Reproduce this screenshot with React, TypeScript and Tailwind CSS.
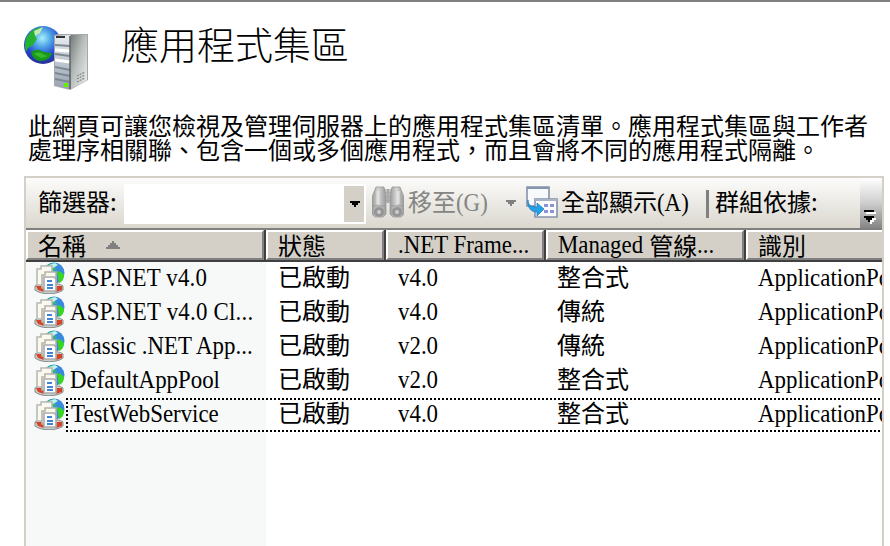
import React from "react";

const cjk = "font-['Noto_Sans_CJK_TC',sans-serif]";
const serif = "inline-block origin-left whitespace-pre font-['Liberation_Serif',serif] text-[26px] scale-x-[.88]";

function ServerIcon() {
  return (
    <svg width="68" height="68" viewBox="0 0 68 68" className="block">
      <defs>
        <radialGradient id="globe" cx=".48" cy=".32" r=".65">
          <stop offset="0" stopColor="#a6f0fc" />
          <stop offset=".35" stopColor="#4fa4e6" />
          <stop offset=".75" stopColor="#2342cf" />
          <stop offset="1" stopColor="#2a369c" />
        </radialGradient>
        <linearGradient id="side" x1="0" y1="0" x2="1" y2="1">
          <stop offset="0" stopColor="#777d7b" />
          <stop offset=".45" stopColor="#b9bfbd" />
          <stop offset="1" stopColor="#eef0f0" />
        </linearGradient>
        <linearGradient id="front" x1="0" y1="0" x2="0" y2="1">
          <stop offset="0" stopColor="#e8edf0" />
          <stop offset="1" stopColor="#95a2b0" />
        </linearGradient>
      </defs>
      <circle cx="19" cy="21" r="19" fill="url(#globe)" />
      <path d="M2 28C-1 18 3 9 11 5l6-2-2 6-4 3 2 3-4 6-5 3Z" fill="#24b233" />
      <path d="M10 7l9-4-3 6-5 3Z" fill="#c4ecb0" />
      <path d="M7 28c5-3 9-3 12 0l9 1c-1 5-6 8-12 8-5-1-8-4-9-9Z" fill="#159a1c" />
      <path d="M10 30c5-3 8-1 10 1l4 1-7 2Z" fill="#3fb92c" />
      <path d="M30 11l4-1h30v46L46 66 30 62Z" fill="#a3a8aa" />
      <path d="M31 12l15-1v54l-15-4Z" fill="url(#front)" />
      <path d="M47 11h16v45L47 65Z" fill="url(#side)" />
      <path d="M32 12h9v2h-9Z" fill="#333" />
      <path d="M31 21l15 1M31 30l15 2M31 43l15 3M31 49l15 3M31 55l15 3" stroke="#7c8893" strokeWidth="2" />
      <path d="M31 26l15 1M31 36l15 2" stroke="#fff" strokeWidth="3" />
      <path d="M46 12v53" stroke="#5c6165" strokeWidth="1.5" />
      <path d="M53 52l8-4M53 55l8-4M53 58l8-4" stroke="#888d8e" strokeWidth="1.3" strokeDasharray="2 1" />
      <path d="M40 59h4v4h-4Z" fill="#61f000" />
    </svg>
  );
}

function PoolIcon() {
  return (
    <svg width="32" height="32" viewBox="0 0 32 32" className="block shrink-0">
      <circle cx="20" cy="11" r="10.5" fill="#3989e0" />
      <path d="M10 8c1-5 5-7 11-7l-2 3 4 3-6 4Z" fill="#31b58a" />
      <path d="M15 3l6-2 3 2-5 3Z" fill="#c2f2ee" />
      <path d="M23 9l4 1 3 3c0 4-2 7-5 8Z" fill="#38d71f" />
      <path d="M1 24c3-4 24-4 28 0v4c-6 5-22 5-28 0Z" fill="#c9cdcd" stroke="#858b8b" />
      <path d="M2 24h8v6l-6-2Z" fill="#d94325" />
      <path d="M20 24h8v4l-6 2Z" fill="#d94325" />
      <path d="M3 7h4V4h11v19H3Z" fill="#fbf9ed" stroke="#b9b9b3" strokeWidth="1.6" />
      <path d="M8 13h3v-3h11v16H8Z" fill="#faf8ec" stroke="#b4b4ae" strokeWidth="1.6" />
      <path d="M10 15h10l2 2v12H10Z" fill="#fff" stroke="#aaa" strokeWidth="1.6" />
      <path d="M13 19h5M13 23h6M13 26h6" stroke="#4284d4" strokeWidth="1.8" />
    </svg>
  );
}

function Binoculars() {
  return (
    <svg width="32" height="32" viewBox="0 0 32 32" className="block shrink-0">
      <defs>
        <linearGradient id="barrel">
          <stop offset="0" stopColor="#9a9a9a" />
          <stop offset=".45" stopColor="#d5d5d5" />
          <stop offset="1" stopColor="#999" />
        </linearGradient>
      </defs>
      <path d="M12 3h8v14h-8Z" fill="#aaa" />
      <path d="M14 3v14M18 3v14" stroke="#ddd" strokeWidth="1" strokeDasharray="3 1" />
      <path d="M4 1h8l2 9v18l-3 3H3l-3-3V11Z" fill="url(#barrel)" stroke="#999" strokeWidth=".8" />
      <path d="M20 1h8l4 10v17l-3 3h-8l-3-3V10Z" fill="url(#barrel)" stroke="#999" strokeWidth=".8" />
      <path d="M6 5v13M26 5v13" stroke="#e0e0e0" strokeWidth="3" />
      <path d="M1 20h12M19 20h12" stroke="#999" />
      <circle cx="7" cy="26" r="5" fill="#959595" />
      <circle cx="25" cy="26" r="5" fill="#959595" />
      <circle cx="7" cy="26" r="2" fill="#ccc" />
      <circle cx="25" cy="26" r="2" fill="#ccc" />
    </svg>
  );
}

function ShowAllIcon() {
  return (
    <svg width="32" height="32" viewBox="0 0 32 32" className="block shrink-0">
      <path d="M1 1h22v19H1Z" fill="#f8f9fb" stroke="#8492aa" strokeWidth="1.6" />
      <path d="M1 1h22v2H1Z" fill="#8594ae" />
      <path d="M9 13h22v18H9Z" fill="#fcfcfd" stroke="#8492aa" strokeWidth="1.6" />
      <path d="M9 13h22v2H9Z" fill="#a9b3c5" />
      <path d="M18 18h4v3h-4ZM24 18h4v3h-4ZM18 24h4v3h-4ZM24 24h4v3h-4Z" fill="#8a94d6" />
      <path d="M2 14c0 5 3 7 9 7v-4l7 6-7 7v-4C4 26 1 20 2 14Z" fill="#25a2e5" stroke="#1875b7" strokeWidth=".7" />
    </svg>
  );
}

function DownArrow({ color }: { color: string }) {
  return (
    <svg width="10" height="6" viewBox="0 0 10 6" className="block shrink-0" shapeRendering="crispEdges">
      <path d="M0 0h10v2H8v2H6v2H4V4H2V2H0Z" fill={color} />
    </svg>
  );
}

function HeadCell({ width, children }: { width: string; children: React.ReactNode }) {
  return (
    <div className={`flex h-8 shrink-0 border-b-2 border-[#404040] ${width}`}>
      <div className="flex min-w-0 flex-1 items-center whitespace-nowrap border-2 border-t-white border-r-[#808080] border-b-[#808080] border-l-white bg-[#d4d0c8] pb-px pl-[10px] leading-[25px]">
        {children}
      </div>
      <div className="w-[2px] bg-[#404040]" />
    </div>
  );
}

const rows = [
  ["ASP.NET v4.0", "v4.0", "整合式", "tracking-[.2px]"],
  ["ASP.NET v4.0 Cl...", "v4.0", "傳統", "tracking-[.25px]"],
  ["Classic .NET App...", "v2.0", "傳統", ""],
  ["DefaultAppPool", "v2.0", "整合式", ""],
  ["TestWebService", "v4.0", "整合式", ""],
];

const dotsX = "h-[2px] bg-[repeating-linear-gradient(90deg,#000_0_2px,transparent_2px_4px)]";

function Row({ row, focused }: { row: string[]; focused: boolean }) {
  return (
    <div className="relative flex h-[34px] w-[856px] items-start overflow-hidden leading-[28px]">
      <div className="flex w-[240px] shrink-0 items-start pl-2">
        <PoolIcon />
        <div className={`w-[190px] whitespace-nowrap ${focused ? "pl-[5px]" : "pl-1"}`}>
          <span className={`${serif} ${row[3]}`}>{row[0]}</span>
        </div>
      </div>
      <div className="w-[120px] shrink-0 pl-[12px]">已啟動</div>
      <div className="w-[160px] shrink-0 pl-[12px]"><span className={serif}>{row[1]}</span></div>
      <div className="w-[200px] shrink-0 pl-[11px]">{row[2]}</div>
      <div className="w-[136px] shrink-0 overflow-hidden pl-[12px]"><span className={serif}>ApplicationPoolIdentity</span></div>
      {focused && (
        <div className="absolute inset-y-0 right-0 left-10 flex flex-col justify-between">
          <div className={dotsX} />
          <div className="w-[2px] flex-1 bg-[repeating-linear-gradient(180deg,transparent_0_2px,#000_2px_4px)]" />
          <div className={dotsX} />
        </div>
      )}
    </div>
  );
}

export default function App() {
  return (
    <div className={`flex h-[546px] w-[890px] flex-col overflow-hidden border-t-2 border-[#808080] bg-white text-2xl text-black ${cjk}`}>
      <header className="flex h-[111px] shrink-0 pt-[22px] pl-6">
        <ServerIcon />
        <h1 className="-mt-[3px] ml-[29px] text-[38px] leading-[44px] font-light">應用程式集區</h1>
      </header>
      <p className="h-[63px] shrink-0 whitespace-nowrap pl-[28px] leading-6">
        此網頁可讓您檢視及管理伺服器上的應用程式集區清單。應用程式集區與工作者
        <br />
        處理序相關聯、包含一個或多個應用程式，而且會將不同的應用程式隔離。
      </p>
      <main className="ml-6 flex w-[860px] flex-1 flex-col overflow-hidden border-x-2 border-t-2 border-[#d4d0c8]">
        <div className="flex h-[52px] shrink-0 items-start border-b-2 border-[#808080] bg-linear-to-b from-[#fcfcfb] to-[#dad7ce] whitespace-nowrap leading-[46px]">
          <div className="w-[98px] shrink-0 pl-[12px]">篩選器:</div>
          <div className="mt-[6px] flex h-10 w-[242px] shrink-0 justify-end bg-white p-[2px]">
            <div className="flex w-5 items-center justify-center bg-[#d4d0c8] pl-[2px]"><DownArrow color="#000" /></div>
          </div>
          <div className="mt-2 ml-[6px]"><Binoculars /></div>
          <div className="ml-1 w-[98px] shrink-0 font-normal text-[#858583]">移至<span className={serif}>(G)</span></div>
          <div className="mt-[22px] w-5 shrink-0"><DownArrow color="#808080" /></div>
          <div className="mt-2"><ShowAllIcon /></div>
          <div className="ml-[3px] w-[145px] shrink-0">全部顯示<span className={serif}>(A)</span></div>
          <div className="mt-3 h-7 w-[3px] shrink-0 bg-[#808080]" />
          <div className="ml-[6px] w-[145px] shrink-0">群組依據:</div>
          <div className="flex h-full w-[22px] shrink-0 flex-col items-center bg-linear-to-b from-white via-[#cecece] to-[#868686] pt-8">
            <svg width="14" height="14" viewBox="0 0 14 14" className="block shrink-0" shapeRendering="crispEdges">
              <path d="M2 2h10v2H2ZM2 8h10v2h-2v2H8v2H6v-2H4v-2H2Z" fill="#fff" />
              <path d="M0 0h10v2H0ZM0 6h10v2H8v2H6v2H4v-2H2V8H0Z" fill="#000" />
            </svg>
          </div>
        </div>
        <div className="flex h-8 shrink-0 overflow-hidden">
          <HeadCell width="w-[240px]">
            名稱
            <svg width="14" height="8" viewBox="0 0 14 8" className="ml-5" shapeRendering="crispEdges">
              <path d="M0 8V6h2V4h2V2h2V0h2v2h2v2h2v2h2v2Z" fill="#808080" />
            </svg>
          </HeadCell>
          <HeadCell width="w-[120px]">狀態</HeadCell>
          <HeadCell width="w-[160px]"><span className={serif}>.NET Frame...</span></HeadCell>
          <HeadCell width="w-[200px]"><span className={`${serif} -mr-3`}>Managed </span>管線<span className={serif}>...</span></HeadCell>
          <HeadCell width="w-[180px]">識別</HeadCell>
        </div>
        <div className="flex-1 bg-[linear-gradient(90deg,#f7f9f9_240px,#fff_240px)]">
          {rows.map((row, i) => <Row key={row[0]} row={row} focused={i === 4} />)}
        </div>
      </main>
    </div>
  );
}
